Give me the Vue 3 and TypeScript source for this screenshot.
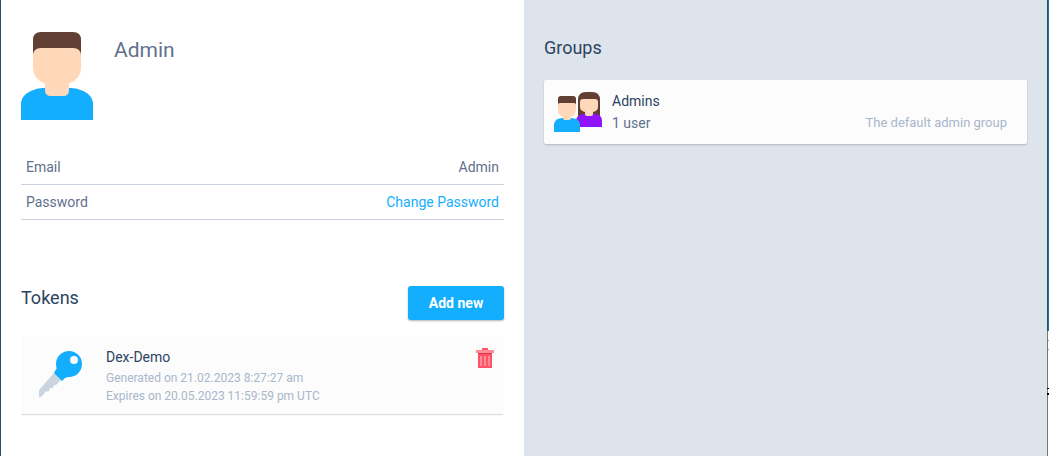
<script setup lang="ts">
interface Token {
  name: string
  generated: string
  expires: string
}

interface Group {
  name: string
  members: string
  description: string
}

const user = { name: 'Admin', email: 'Admin' }

const tokens: Token[] = [
  { name: 'Dex-Demo', generated: '21.02.2023 8:27:27 am', expires: '20.05.2023 11:59:59 pm UTC' },
]

const groups: Group[] = [
  { name: 'Admins', members: '1 user', description: 'The default admin group' },
]
</script>

<template>
  <div class="page">
    <main class="account">
      <header class="profile">
        <svg class="avatar" viewBox="0 0 72 88" aria-hidden="true">
          <path d="M0 88V72C0 62 12 56 24 56H48C60 56 72 62 72 72V88Z" fill="#14aeff" />
          <path d="M12 35V8Q12 0 20 0H52Q60 0 60 8V35Z" fill="#623f33" />
          <path d="M12 24Q12 16 20 16H52Q60 16 60 24V36Q60 47 48 51.500V58Q48 64 42 64H30Q24 64 24 58V51.500Q12 47 12 36Z" fill="#ffd8b9" />
        </svg>
        <h1>{{ user.name }}</h1>
      </header>

      <dl class="details">
        <div class="row">
          <dt>Email</dt>
          <dd>{{ user.email }}</dd>
        </div>
        <div class="row">
          <dt>Password</dt>
          <dd><a href="#password">Change Password</a></dd>
        </div>
      </dl>

      <section>
        <div class="section-head">
          <h2>Tokens</h2>
          <button class="add" type="button">Add new</button>
        </div>
        <article v-for="token in tokens" :key="token.name" class="card token">
          <svg class="key" viewBox="0 0 46 48" aria-hidden="true">
            <path d="M17 21L24 28L18 34L16 34L15 37L12 37L11 40L7 41L6 43L3 46L1 46V39Z" fill="#cbd5df" />
            <circle cx="31" cy="13" r="13" fill="#14aeff" />
            <path d="M19 17L17 20L16 22L24 30L27 27L33 25L22 14Z" fill="#14aeff" />
            <circle cx="36" cy="9" r="4" fill="#fcfcfc" />
          </svg>
          <div class="token-text">
            <h3>{{ token.name }}</h3>
            <p>Generated on {{ token.generated }}</p>
            <p>Expires on {{ token.expires }}</p>
          </div>
          <button class="delete" type="button" aria-label="Delete token">
            <svg viewBox="0 0 18 20" aria-hidden="true">
              <path d="M6 0H12V2H6ZM2 5H16V20H2Z" fill="#ff5468" />
              <path d="M0 2H18V5H0ZM4 8H6V18H4ZM8 8H10V18H8ZM12 8H14V18H12Z" fill="#ff8c98" />
              <path d="M2 5H16V6H2Z" fill="#d63c50" />
            </svg>
          </button>
        </article>
      </section>
    </main>

    <aside class="groups">
      <h2>Groups</h2>
      <article v-for="group in groups" :key="group.name" class="card group">
        <svg class="people" viewBox="0 0 48 40" aria-hidden="true">
          <path d="M24 24V8Q24 0 32 0H38Q46 0 46 8V24Z" fill="#623f33" />
          <path d="M22 35V28Q23 22 31 22H40Q48 22 48 29V35Z" fill="#9013fe" />
          <path d="M26 10Q26 7 29 7H41Q44 7 44 10V15Q44 19 39 20V22Q39 24 37 24H33Q31 24 31 22V20Q26 19 26 15Z" fill="#ffd8b9" />
          <path d="M0 40V32Q1 26 9 26H17Q25 26 26 32V40Z" fill="#14aeff" />
          <path d="M4 16V7Q4 4 7 4H19Q22 4 22 7V16Z" fill="#623f33" />
          <path d="M4 13Q4 11 6 11H20Q22 11 22 13V18Q22 23 17 25V26Q17 28 15 28H11Q9 28 9 26V25Q4 23 4 18Z" fill="#ffd8b9" />
        </svg>
        <div class="group-text">
          <h3>{{ group.name }}</h3>
          <p>{{ group.members }}</p>
        </div>
        <p class="description">{{ group.description }}</p>
      </article>
    </aside>

    <div class="edge" aria-hidden="true">
      <div class="edge-top"></div>
      <div class="edge-bottom">
        <svg viewBox="0 0 2 125" width="2" height="125">
          <path d="M0 0H1V125H0Z" fill="#777" />
          <path d="M1 9H2V10H1ZM1 18H2V19H1Z" fill="#999" />
          <path d="M0 57H2V58H0ZM0 62H2V64H0Z" fill="#000" />
        </svg>
      </div>
    </div>
  </div>
</template>

<style>
body {
  margin: 0;
}
</style>

<style scoped>
.page {
  display: grid;
  grid-template-columns: 1fr 1fr 2px;
  min-height: 100vh;
  box-sizing: border-box;
  border-left: 1px solid #334865;
  background: #fff;
  color: #5f718c;
  font-family: Roboto, "Liberation Sans", sans-serif;
  font-size: 14px;
  line-height: 20px;
}

h1, h2, h3, p, dl, dd {
  margin: 0;
  font-weight: 400;
}

h1 {
  font-size: 21px;
  line-height: 36px;
}

h2 {
  color: #2d4361;
  font-size: 18px;
  line-height: 24px;
}

h3 {
  color: #2d4361;
  font-size: 14px;
  line-height: 22px;
}

.account {
  padding: 32px 20px;
}

.profile {
  display: flex;
  gap: 21px;
}

.avatar {
  width: 72px;
  height: 88px;
}

.details {
  margin-top: 30px;
}

.row {
  display: flex;
  justify-content: space-between;
  height: 34px;
  padding: 0 5px;
  border-bottom: 1px solid #c8d3de;
  line-height: 34px;
}

a {
  color: #14aeff;
  text-decoration: none;
}

.section-head {
  display: flex;
  justify-content: space-between;
  margin: 66px 0 16px;
}

.add {
  width: 96px;
  height: 34px;
  padding: 0;
  border: 0;
  border-radius: 3px;
  background: #14aeff;
  box-shadow: 0 1px 2px rgb(0 0 0 / 30%);
  color: #fff;
  font: 700 14px/34px Roboto, "Liberation Sans", sans-serif;
}

.card {
  display: flex;
  background: #fcfcfc;
}

.token {
  padding: 10px 10px 9px 17px;
  box-shadow: 0 2px 1px -1px rgb(0 0 0 / 14%);
}

.key {
  width: 46px;
  height: 48px;
  margin-top: 5px;
}

.token-text {
  flex: 1;
  margin-left: 22px;
}

.token-text h3 {
  margin-bottom: 1px;
}

.token-text p,
.description {
  color: #a9b7cb;
  font-size: 13px;
  line-height: 18px;
}

.token-text p {
  font-size: 12px;
}

.delete {
  align-self: flex-start;
  width: 18px;
  height: 20px;
  margin-top: 2px;
  padding: 0;
  border: 0;
  background: none;
}

.delete svg {
  display: block;
}

.groups {
  padding: 36px 20px;
  background: #dde4eb;
}

.group {
  margin-top: 20px;
  padding: 10px 20px 10px 10px;
  border-radius: 2px;
  box-shadow: 0 1px 2px rgb(0 0 0 / 20%);
}

.people {
  width: 48px;
  height: 40px;
  margin-top: 2px;
}

.group-text {
  flex: 1;
  margin-left: 10px;
  line-height: 22px;
}

.description {
  align-self: flex-end;
  padding-bottom: 2px;
}

.edge {
  display: flex;
  flex-direction: column;
}

.edge-top {
  flex: 1;
  background: linear-gradient(90deg, #3c4c60 50%, #107c9c 50%);
}

.edge-bottom svg {
  display: block;
}
</style>
